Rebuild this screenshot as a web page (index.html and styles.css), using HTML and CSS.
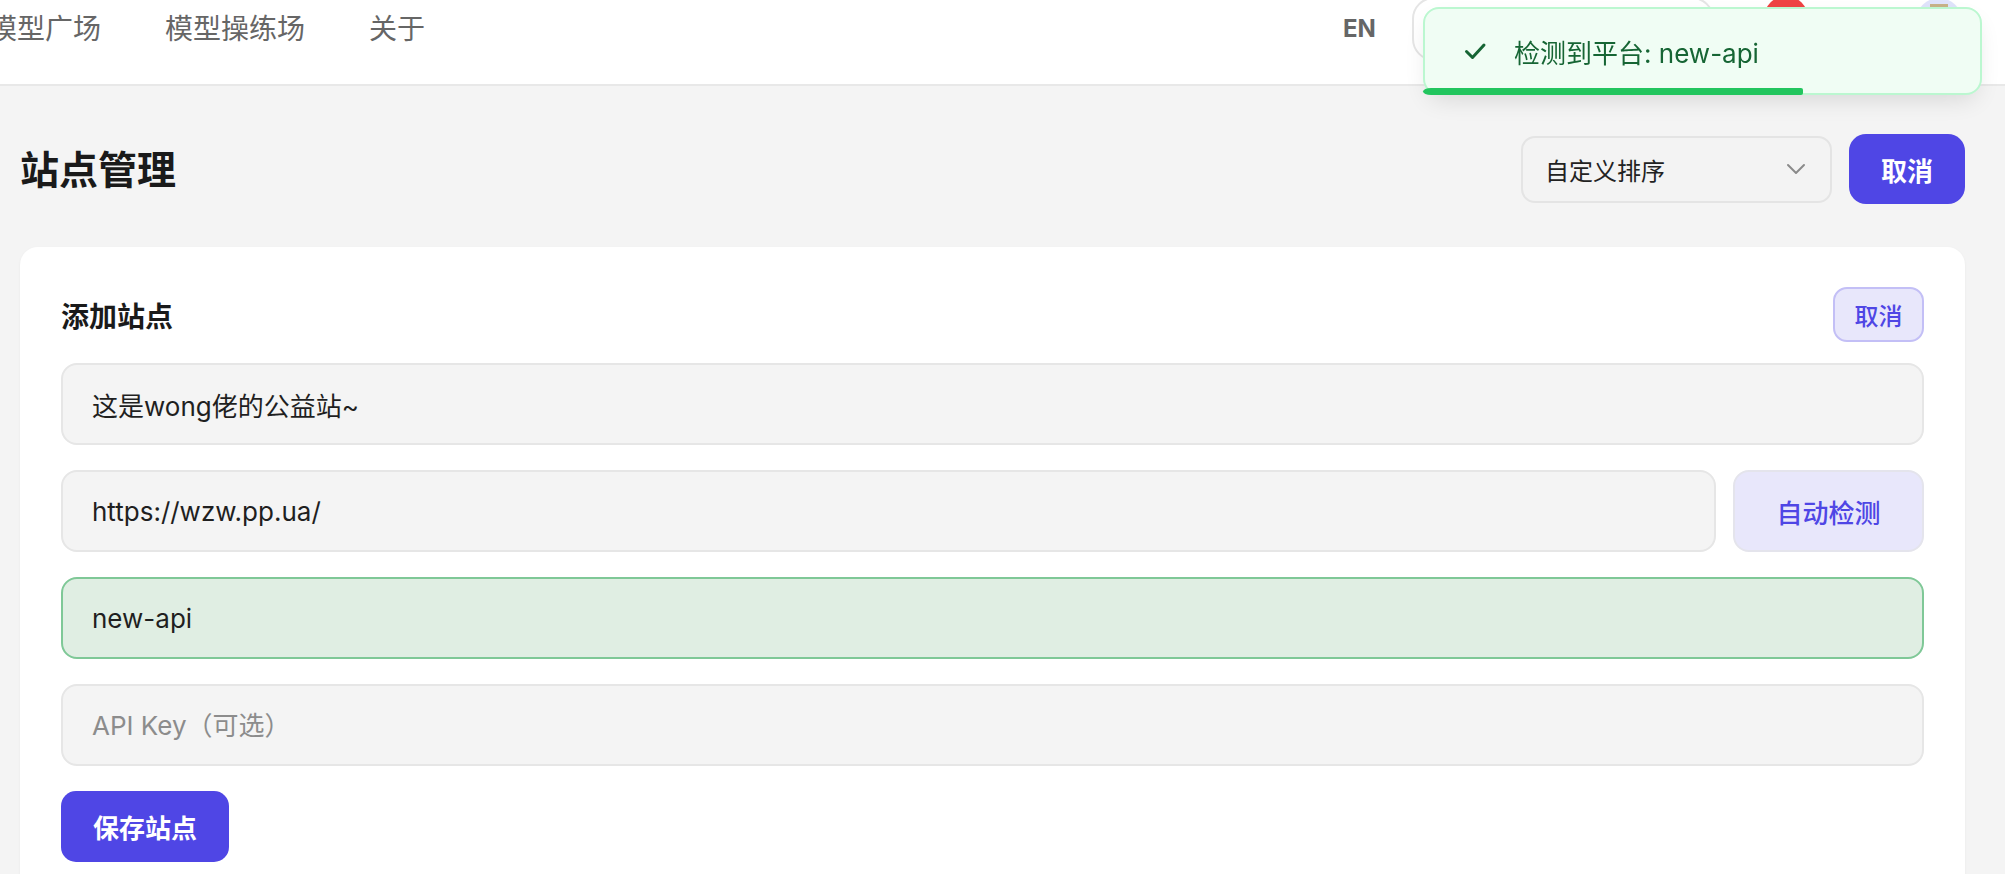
FILE: index.html
```html
<!DOCTYPE html>
<html lang="zh-CN">
<head>
<meta charset="utf-8">
<title>站点管理</title>
<link rel="stylesheet" href="styles.css">
</head>
<body>
<header class="topbar">
  <nav class="nav">
    <a class="nav-link">模型广场</a>
    <a class="nav-link">模型操练场</a>
    <a class="nav-link">关于</a>
  </nav>
  <div class="top-actions">
    <span class="lang">EN</span>
    <div class="search"></div>
    <span class="badge-dot"></span>
    <span class="avatar"><span class="avatar-img"></span></span>
  </div>
</header>

<main class="page">
  <div class="page-head">
    <h1 class="page-title">站点管理</h1>
    <div class="head-actions">
      <div class="select">
        <span>自定义排序</span>
        <svg class="chevron" width="20" height="12" viewBox="0 0 20 12"><path d="M2 2l8 8 8-8" fill="none" stroke="#8a8a8a" stroke-width="2" stroke-linecap="round" stroke-linejoin="round"/></svg>
      </div>
      <button class="btn-primary btn-head">取消</button>
    </div>
  </div>

  <section class="card">
    <div class="card-head">
      <h2 class="card-title">添加站点</h2>
      <button class="btn-soft">取消</button>
    </div>
    <div class="form">
      <input class="field" value="这是wong佬的公益站~">
      <div class="field-row">
        <input class="field" value="https://wzw.pp.ua/">
        <button class="btn-detect">自动检测</button>
      </div>
      <input class="field field-ok" value="new-api">
      <input class="field" placeholder="API Key（可选）">
      <div class="form-actions">
        <button class="btn-primary btn-save">保存站点</button>
      </div>
    </div>
  </section>
</main>

<div class="toast">
  <svg class="toast-icon" width="24" height="24" viewBox="0 0 24 24"><path d="M3.5 12.5l6 6L21 6" fill="none" stroke="#166534" stroke-width="3" stroke-linecap="round" stroke-linejoin="round"/></svg>
  <span class="toast-text">检测到平台: new-api</span>
  <span class="toast-progress"></span>
</div>
</body>
</html>
```

FILE: styles.css
```css
* { box-sizing: border-box; }

html, body {
  margin: 0;
  padding: 0;
  overflow: hidden;
  height: 100%;
}

body {
  background: #f4f4f4;
  font-family: Inter, "Noto Sans CJK SC", sans-serif;
  color: #1c1c1c;
}

button, input {
  font-family: inherit;
}

/* ---------- top bar ---------- */
.topbar {
  height: 86px;
  display: flex;
  align-items: center;
  padding-bottom: 27px;
  background: #ffffff;
  border-bottom: 2px solid #e8e8e8;
}

.nav {
  display: flex;
  gap: 64px;
  margin-left: -11px;
}

.nav-link {
  font-size: 28px;
  color: #666666;
  line-height: 1;
}

.top-actions {
  margin-left: auto;
  padding-right: 43px;
  display: flex;
  align-items: center;
  height: 57px;
}

.lang {
  font-size: 24px;
  font-weight: 700;
  color: #666666;
  width: 32px;
}

.search {
  margin-left: 37px;
  width: 302px;
  height: 64px;
  border: 2px solid #e5e5e5;
  border-radius: 22px;
  background: #ffffff;
}

.badge-dot {
  align-self: flex-start;
  margin-top: -4px;
  margin-left: 50px;
  width: 44px;
  height: 44px;
  border-radius: 50%;
  background: #ef4444;
}

.avatar {
  align-self: flex-start;
  margin-top: -2px;
  margin-left: 108px;
  width: 46px;
  height: 46px;
  border-radius: 50%;
  background: #dfe3fb;
  display: flex;
  justify-content: center;
  padding-top: 6px;
}

.avatar-img {
  width: 18px;
  height: 18px;
  background: #c7b288;
}

/* ---------- page ---------- */
.page {
  padding: 48px 40px 0 20px;
}

.page-head {
  display: flex;
  align-items: center;
  justify-content: space-between;
  height: 70px;
}

.page-title {
  margin: 0;
  font-size: 39px;
  font-weight: 700;
  line-height: 1;
  color: #1a1a1a;
}

.head-actions {
  display: flex;
  align-items: center;
  gap: 17px;
}

.select {
  width: 311px;
  height: 67px;
  border: 2px solid #e4e4e4;
  border-radius: 14px;
  background: #f3f3f3;
  display: flex;
  align-items: center;
  justify-content: space-between;
  padding: 0 24px 0 22px;
  font-size: 24px;
  color: #222222;
}

.chevron { display: block; }

.btn-primary {
  border: none;
  background: #4f46e5;
  color: #ffffff;
  font-weight: 700;
  font-size: 26px;
  cursor: pointer;
}

.btn-head {
  width: 116px;
  height: 70px;
  border-radius: 17px;
}

/* ---------- card ---------- */
.card {
  margin-top: 43px;
  background: #ffffff;
  border-radius: 18px;
  padding: 40px 41px;
  box-shadow: 0 1px 3px rgba(0, 0, 0, 0.05);
}

.card-head {
  display: flex;
  align-items: center;
  justify-content: space-between;
  height: 55px;
}

.card-title {
  margin: 0;
  font-size: 28px;
  font-weight: 700;
  color: #1a1a1a;
}

.btn-soft {
  width: 91px;
  height: 55px;
  border: 2px solid #c3bff6;
  border-radius: 14px;
  background: #e8e7fb;
  color: #4f46e5;
  font-size: 24px;
  font-weight: 500;
}

.form {
  margin-top: 21px;
  display: flex;
  flex-direction: column;
  gap: 25px;
}

.field {
  width: 100%;
  height: 82px;
  border: 2px solid #e6e6e6;
  border-radius: 16px;
  background: #f4f4f4;
  padding: 0 29px;
  font-size: 26px;
  color: #1f1f1f;
  outline: none;
}

.field::placeholder {
  color: #8c8c8c;
}

.field-ok {
  background: #e0eee3;
  border-color: #7fc897;
}

.field-row {
  display: flex;
  gap: 17px;
}

.field-row .field {
  flex: 1;
}

.btn-detect {
  flex: 0 0 191px;
  height: 82px;
  border: 2px solid #e4e4ec;
  border-radius: 16px;
  background: #e8e7fb;
  color: #4f46e5;
  font-size: 26px;
  font-weight: 500;
}

.form-actions {
  display: flex;
}

.btn-save {
  width: 168px;
  height: 71px;
  border-radius: 15px;
}

/* ---------- toast ---------- */
.toast {
  position: fixed;
  top: 7px;
  left: 1423px;
  width: 559px;
  height: 88px;
  border: 2px solid #bbf7d0;
  border-radius: 16px;
  background: #f0fdf4;
  display: flex;
  align-items: center;
  gap: 27px;
  padding-left: 38px;
  box-shadow: 0 10px 25px -6px rgba(0, 0, 0, 0.12);
}

.toast-icon { display: block; }

.toast-text {
  font-size: 26px;
  color: #166534;
}

.toast-progress {
  position: absolute;
  left: -2px;
  bottom: -2px;
  width: 380px;
  height: 7px;
  background: #22c55e;
  border-radius: 16px 4px 4px 16px / 7px 4px 4px 7px;
}
```
